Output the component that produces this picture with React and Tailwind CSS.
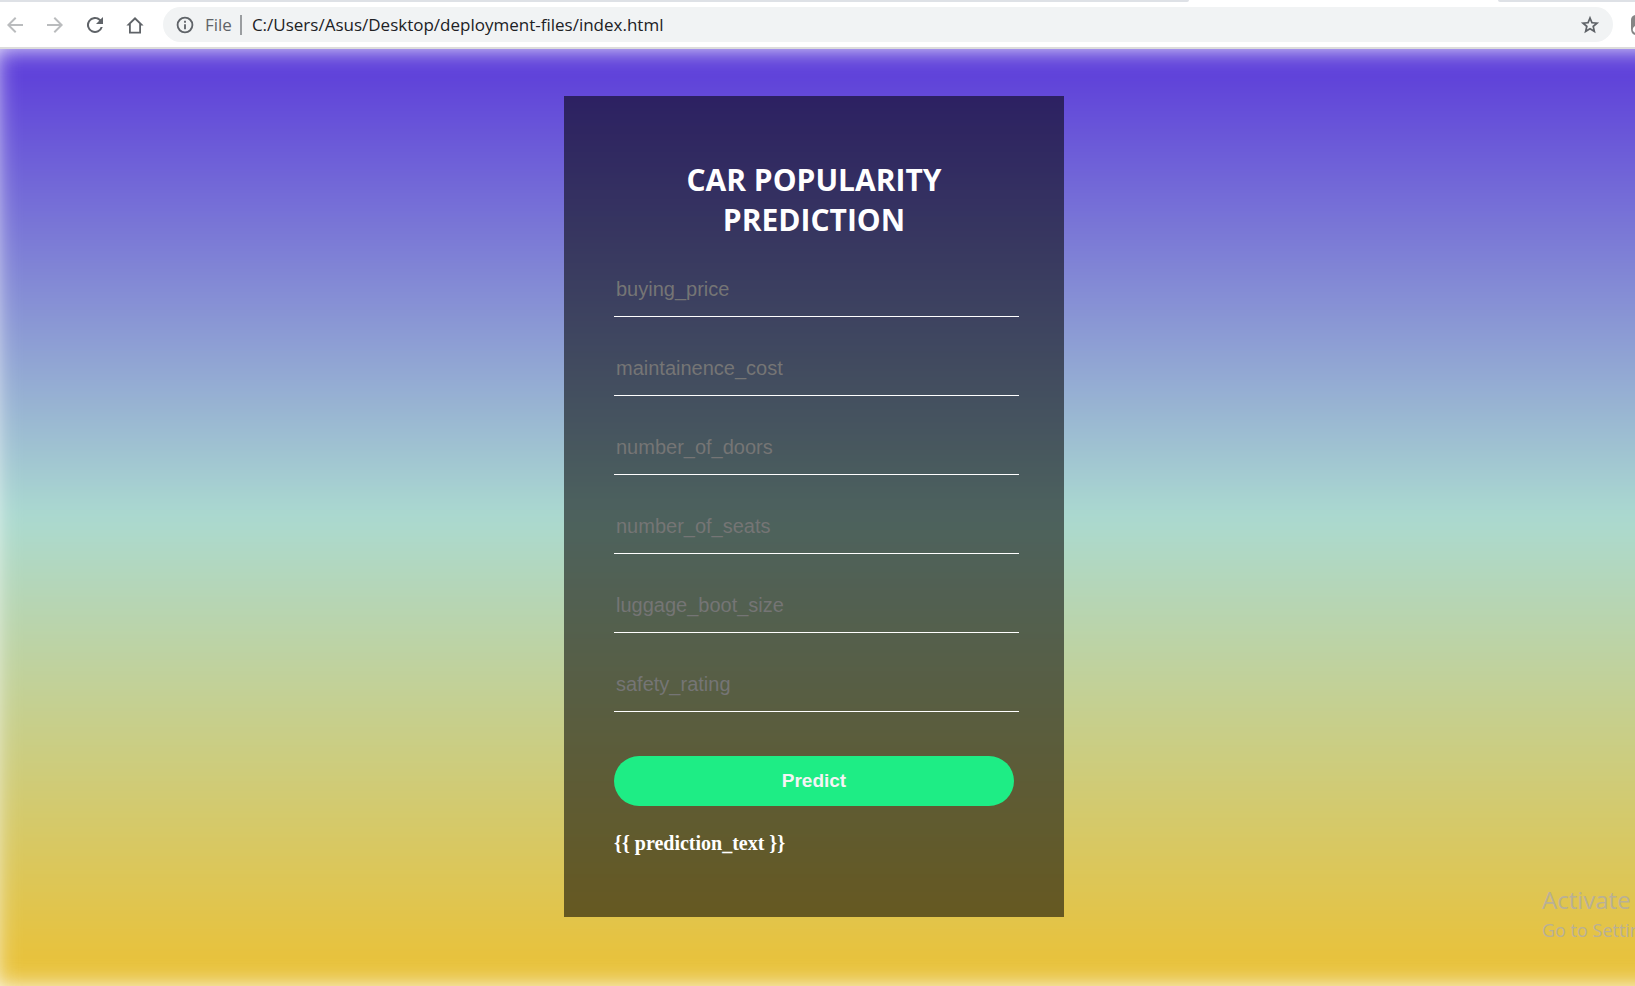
import React from "react";

const fields = [
  "buying_price",
  "maintainence_cost",
  "number_of_doors",
  "number_of_seats",
  "luggage_boot_size",
  "safety_rating",
];

function Icon({ d, className = "" }) {
  return (
    <svg viewBox="0 0 24 24" fill="currentColor" aria-hidden="true" className={`shrink-0 ${className}`}>
      <path d={d} />
    </svg>
  );
}

function BrowserBar() {
  return (
    <header className="border-b-2 border-[#dcdcdc] bg-white">
      <div className="flex h-[2px] justify-between">
        <div className="w-[72.7%] rounded-br-sm bg-[#dee1e6]" />
        <div className="w-[8.4%] rounded-bl-sm bg-[#dee1e6]" />
      </div>
      <div className="flex items-center overflow-hidden py-[5px] pl-[3px] text-[#5f6368]">
        <nav className="flex shrink-0 items-center gap-4" aria-label="Browser">
          <button type="button" aria-label="Back" className="text-[#babcbe]">
            <Icon className="size-6" d="M20 11H7.8l5.6-5.600L12 4l-8 8 8 8 1.400-1.400L7.800 13H20z" />
          </button>
          <button type="button" aria-label="Forward" className="text-[#babcbe]">
            <Icon className="size-6" d="M4 11h12.200l-5.600-5.600L12 4l8 8-8 8-1.400-1.400 5.600-5.600H4z" />
          </button>
          <button type="button" aria-label="Reload">
            <Icon className="size-6" d="M17.65 6.35A8 8 0 1 0 19.73 14h-2.08A6 6 0 1 1 12 6c1.66 0 3.14.69 4.22 1.78L13 11h7V4z" />
          </button>
          <button type="button" aria-label="Home">
            <Icon className="size-6" d="M12 4 3.4 12.500H6V20.500h12v-8h2.600zm0 2.700 4.200 4.100v7.900H7.800v-7.900z" />
          </button>
        </nav>
        <div className="ml-4 flex h-[35px] min-w-0 flex-1 items-center rounded-full bg-[#f1f3f4] pr-3 pl-3 font-['Open_Sans','Noto_Sans',sans-serif] text-[17px]">
          <Icon
            className="size-5"
            d="M10.900 7h2.200v2.200h-2.200zm0 4h2.200v6h-2.200zM12 2a10 10 0 1 0 0 20 10 10 0 0 0 0-20zm0 17.800a7.800 7.800 0 1 1 0-15.600 7.800 7.800 0 0 1 0 15.600z"
          />
          <span className="ml-2.5">File</span>
          <span className="ml-2 h-5 w-[2px] shrink-0 bg-[#9a9da0]" />
          <input
            aria-label="Address"
            className="ml-2.5 min-w-0 flex-1 bg-transparent text-[#202124] outline-none"
            defaultValue="C:/Users/Asus/Desktop/deployment-files/index.html"
          />
          <button type="button" aria-label="Bookmark">
            <Icon
              className="size-[22px]"
              d="m22 9.240-7.190-.62L12 2 9.190 8.630 2 9.240l5.460 4.730L5.820 21 12 17.270 18.180 21l-1.630-7.030zM12 15l-3.300 2 .9-3.800-2.950-2.550 3.900-.33L12 6.750l1.500 3.570 3.900.33-2.950 2.550.9 3.800z"
            />
          </button>
        </div>
        <svg viewBox="0 0 4 20" aria-hidden="true" className="ml-[18px] h-5 w-1 shrink-0">
          <path d="M4 0Q0 1 0 5v9q0 5 4 6z" fill="#858585" />
          <path d="M4 11Q1 13 2 16l2 2z" fill="#fff" />
        </svg>
      </div>
    </header>
  );
}

export default function App() {
  return (
    <div className="flex min-h-screen flex-col bg-white">
      <BrowserBar />
      <main className="relative isolate flex flex-1 justify-center overflow-hidden pt-[47px] pr-[7px] pb-[69px]">
        <div className="absolute -inset-y-[2px] -right-10 -left-1.5 -z-10 bg-[linear-gradient(#5e3fda_2%,#abdad0_50%,#e8c23c_97%)] blur-[12px]" />
        <form
          onSubmit={(e) => e.preventDefault()}
          className="w-[500px] bg-black/55 px-[50px] pt-16 pb-[57px]"
        >
          <h1 className="mx-auto w-[300px] text-center font-['Open_Sans','Noto_Sans',sans-serif] text-[30px] leading-10 font-bold text-white">
            CAR POPULARITY PREDICTION
          </h1>
          <div className="mt-[37px] flex flex-col gap-[39px]">
            {fields.map((name) => (
              <input
                key={name}
                type="text"
                name={name}
                aria-label={name}
                placeholder={name}
                className="h-10 w-[405px] border-b border-white bg-transparent px-[2px] pb-[14px] font-['Liberation_Sans',Arial,sans-serif] text-[20px] text-white outline-none placeholder:text-[#757575]"
              />
            ))}
          </div>
          <button
            type="submit"
            className="mt-11 h-[50px] w-full rounded-full bg-[#1eed85] font-['Liberation_Sans',Arial,sans-serif] text-[19px] font-bold text-[#f4f4f4]"
          >
            Predict
          </button>
          <p className="mt-[26px] font-['Liberation_Serif','Times_New_Roman',serif] text-[20px] leading-[22px] font-bold text-white">
            {"{{ prediction_text }}"}
          </p>
        </form>
        <aside className="absolute top-[835px] left-full -ml-[93px] font-['Open_Sans','Noto_Sans',sans-serif] whitespace-nowrap text-[#b9b096]">
          <p className="text-[24px] leading-8">Activate</p>
          <p className="text-[18px] leading-7">Go to Settings</p>
        </aside>
      </main>
    </div>
  );
}
